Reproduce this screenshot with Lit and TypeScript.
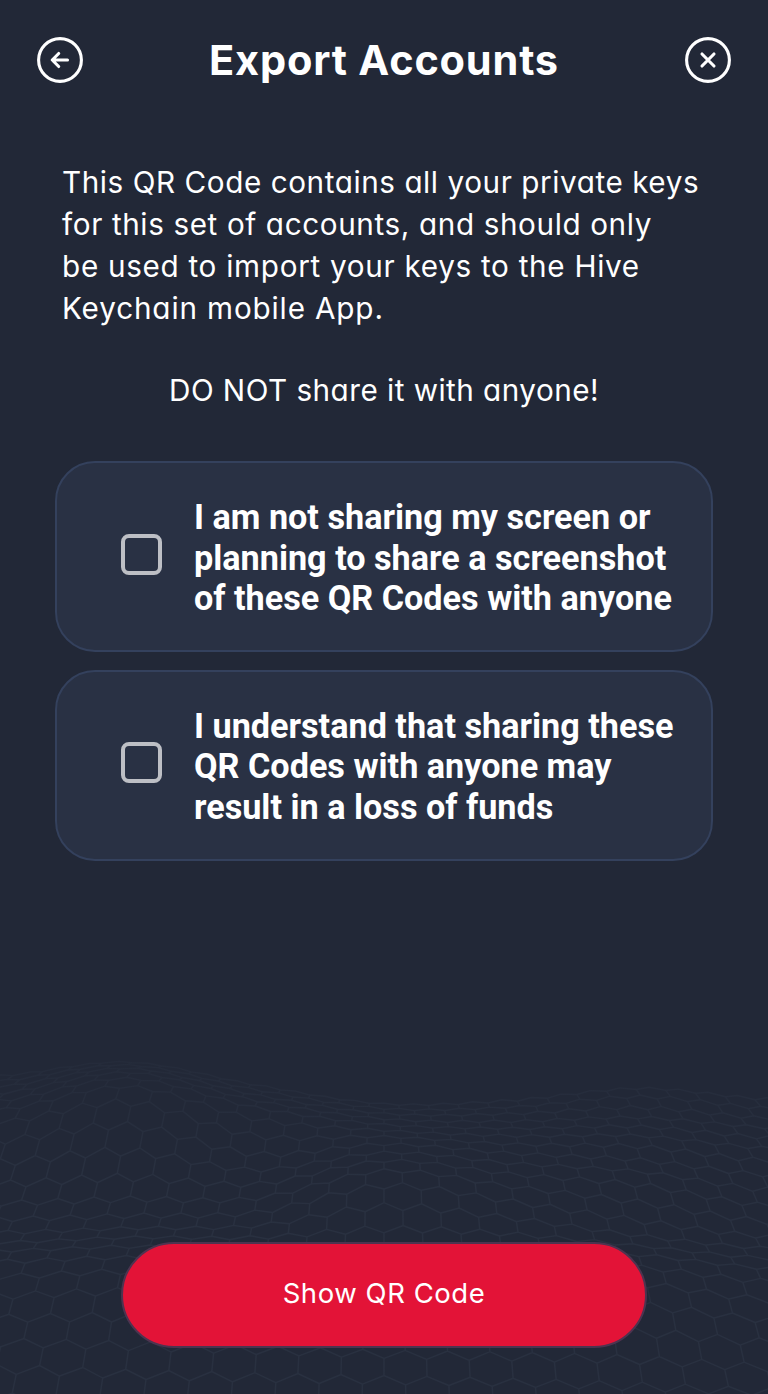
import { LitElement, html, css, svg } from "lit";
import { customElement, property } from "lit/decorators.js";

// Row centres of the honeycomb sheet, bottom row first, one list per 128px column.
const ROWS: number[][] = [
  [1060, 975, 900, 830, 765, 715, 675, 650, 625, 590, 545, 495, 430, 365, 300, 255, 225, 200, 180, 160, 145, 130],
  [1075, 990, 905, 820, 750, 700, 665, 635, 610, 580, 535, 480, 405, 325, 250, 185, 155, 135, 120, 110, 100, 92],
  [1085, 1000, 920, 840, 770, 715, 675, 640, 605, 570, 525, 485, 440, 400, 345, 290, 245, 220, 203, 187, 172, 158],
  [1090, 1010, 935, 865, 800, 740, 685, 630, 565, 495, 440, 405, 380, 355, 330, 310, 292, 275, 258, 243, 228, 215],
  [1095, 1020, 940, 860, 790, 730, 680, 635, 590, 540, 490, 450, 415, 385, 355, 330, 305, 285, 262, 240, 222, 200],
  [1110, 1030, 950, 865, 790, 735, 690, 660, 635, 600, 545, 490, 440, 410, 370, 330, 305, 275, 250, 215, 185, 165],
  [1120, 1050, 975, 900, 840, 780, 730, 700, 670, 640, 600, 550, 505, 455, 415, 370, 340, 305, 280, 250, 220, 195],
];

const spline = (a: number, b: number, c: number, d: number, t: number) =>
  0.5 * (2 * b + (c - a) * t + (2 * a - 5 * b + 4 * c - d) * t * t + (3 * b - a - 3 * c + d) * t * t * t);

function rowAt(col: number[], r: number): number {
  if (r < 0) return col[0] - r * 85;
  const i = Math.min(Math.floor(r), col.length - 2);
  return col[i] + (col[i + 1] - col[i]) * Math.min(r - i, 1.4);
}

function sheetY(x: number, r: number): number {
  const p = Math.max(0, Math.min(5.999, x / 128));
  const k = Math.floor(p);
  const at = (n: number) => rowAt(ROWS[Math.max(0, Math.min(6, n))], r);
  return spline(at(k - 1), at(k), at(k + 1), at(k + 2), p - k) / 3;
}

function meshPath(): string {
  const out: string[] = [];
  const pt = (u: number, r: number) => {
    const w = 43.5 - Math.max(-1, r) * 0.68;
    const x = 384 + u * w;
    return `${x.toFixed(1)} ${sheetY(x, r).toFixed(1)}`;
  };
  for (let i = -1; i < 21; i++) {
    const off = i % 2 ? 0.5 : 0;
    for (let j = -14; j <= 14; j++) {
      const u = j + off;
      out.push(`M${pt(u - 0.5, i - 0.33)}L${pt(u - 0.5, i + 0.33)}L${pt(u, i + 0.67)}L${pt(u + 0.5, i + 0.33)}`);
    }
  }
  return out.join("");
}

const MESH = meshPath();

@customElement("round-icon")
class RoundIcon extends LitElement {
  @property() name = "back";
  static styles = css`
    :host { display: block; width: 48px; height: 48px; }
    svg { display: block; }
  `;
  render() {
    return html`<svg width="48" height="48" viewBox="0 0 48 48" fill="none" stroke="#fff" stroke-width="3.1" stroke-linecap="round" stroke-linejoin="round">
      <circle cx="24" cy="24" r="21.4"></circle>
      ${this.name === "back"
        ? svg`<path d="M31.5 24H16.5M22.7 17.5L16.2 24L22.7 30.5"></path>`
        : svg`<path d="M18 18L30 30M30 18L18 30"></path>`}
    </svg>`;
  }
}

@customElement("confirm-card")
class ConfirmCard extends LitElement {
  @property({ type: Array }) lines: string[] = [];
  static styles = css`
    :host {
      box-sizing: border-box; display: flex; align-items: center; height: 191px;
      padding: 0 0 0 64px; gap: 32px; border: 2px solid #34415d; border-radius: 40px;
      background: #293144; color: #fff;
    }
    .box {
      box-sizing: border-box; flex: none; width: 41px; height: 41px; margin-bottom: 5px;
      border: 4px solid #bdbfc5; border-radius: 8px;
    }
    .label { font: 700 34.2px/40.5px Roboto, sans-serif; white-space: nowrap; padding-top: 3px; }
    .line { display: block; }
  `;
  render() {
    return html`<span class="box" role="checkbox" aria-checked="false"></span>
      <span class="label">${this.lines.map((l) => html`<span class="line">${l}</span>`)}</span>`;
  }
}

@customElement("app-root")
class AppRoot extends LitElement {
  static styles = css`
    :host {
      box-sizing: border-box; position: relative; display: flex; flex-direction: column;
      height: 1394px; overflow: hidden; background: #222837; color: #fff;
      font-family: Inter, sans-serif; font-feature-settings: "cv11";
    }
    .mesh { position: absolute; left: 0; bottom: 0; }
    header { display: flex; justify-content: space-between; align-items: center; height: 120px; padding: 0 36px; }
    h1 { margin: 0; font-size: 41.5px; font-weight: 650; line-height: 60px; letter-spacing: 0.8px; white-space: nowrap; }
    .intro { margin: 41px 0 0 62px; font-size: 29.7px; line-height: 42px; white-space: nowrap; }
    .intro span { display: block; }
    .l1 { letter-spacing: 0.56px; }
    .l2 { letter-spacing: 0.61px; }
    .l3 { letter-spacing: 0.7px; }
    .l4 { letter-spacing: 0.85px; }
    .warn { margin: 40px 0 0; text-align: center; font-size: 29.7px; line-height: 42px; letter-spacing: 0.47px; }
    .cards { display: flex; flex-direction: column; gap: 17.5px; margin: 50px 55px 0; }
    .action {
      position: relative; box-sizing: border-box; width: 526px; height: 106px; margin: auto auto 46px;
      border: 2px solid #4d3450; border-radius: 53px; background: #e31337; color: #fff;
      font: inherit; font-feature-settings: inherit; font-size: 27.5px; letter-spacing: 0.55px; padding: 0 0 5px;
    }
  `;
  render() {
    return html`
      <svg class="mesh" width="768" height="364" viewBox="0 0 768 364" aria-hidden="true">
        <defs>
          <linearGradient id="fade" x1="0" y1="20" x2="0" y2="140" gradientUnits="userSpaceOnUse">
            <stop offset="0" stop-color="#2b3343" stop-opacity="0.25"></stop>
            <stop offset="1" stop-color="#2b3343" stop-opacity="0.75"></stop>
          </linearGradient>
        </defs>
        <path d=${MESH} fill="none" stroke="url(#fade)" stroke-width="1.4"></path>
      </svg>
      <header>
        <round-icon name="back"></round-icon>
        <h1>Export Accounts</h1>
        <round-icon name="close"></round-icon>
      </header>
      <p class="intro">
        <span class="l1">This QR Code contains all your private keys</span>
        <span class="l2">for this set of accounts, and should only</span>
        <span class="l3">be used to import your keys to the Hive</span>
        <span class="l4">Keychain mobile App.</span>
      </p>
      <p class="warn">DO NOT share it with anyone!</p>
      <div class="cards">
        <confirm-card .lines=${["I am not sharing my screen or", "planning to share a screenshot", "of these QR Codes with anyone"]}></confirm-card>
        <confirm-card .lines=${["I understand that sharing these", "QR Codes with anyone may", "result in a loss of funds"]}></confirm-card>
      </div>
      <button class="action">Show QR Code</button>
    `;
  }
}
